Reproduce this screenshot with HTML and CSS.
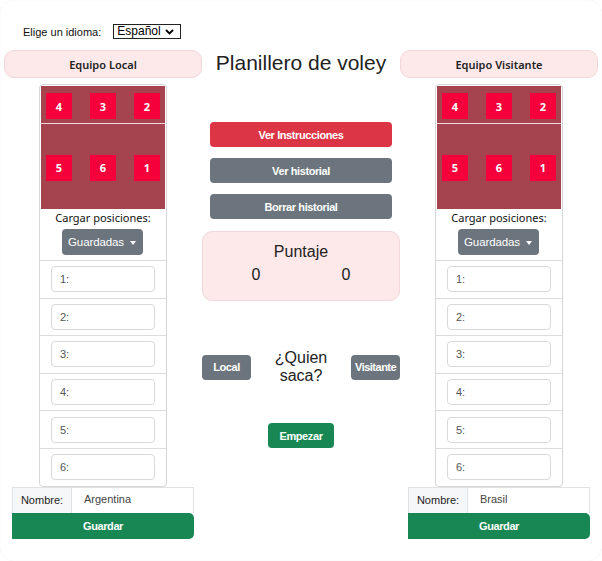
FILE: index.html
```html
<!DOCTYPE html>
<html lang="es">
<head>
<meta charset="utf-8">
<title>Planillero de voley</title>
<link rel="stylesheet" href="styles.css">
</head>
<body>
<div class="page">
  <div class="lang-row">
    <label class="lang-label" for="lang">Elige un idioma:</label>
    <span class="select-wrap">
      <select id="lang" class="lang-select">
        <option>Español</option>
        <option>English</option>
      </select>
      <svg class="chev" width="9" height="6" viewBox="0 0 9 6"><path d="M1 1 L4.5 4.5 L8 1" fill="none" stroke="#000" stroke-width="1.8"/></svg>
    </span>
  </div>

  <div class="columns">
    <section class="team">
      <div class="team-header">Equipo Local</div>
      <div class="team-box">
        <div class="court">
          <div class="court-row front">
            <span class="player">4</span><span class="player">3</span><span class="player">2</span>
          </div>
          <div class="court-row back">
            <span class="player">5</span><span class="player">6</span><span class="player">1</span>
          </div>
        </div>
        <div class="load-label">Cargar posiciones:</div>
        <div class="load-wrap"><button class="btn btn-gray dropdown">Guardadas <span class="caret"></span></button></div>
        <ul class="pos-list">
          <li><input class="pos-input" placeholder="1:"></li>
          <li><input class="pos-input" placeholder="2:"></li>
          <li><input class="pos-input" placeholder="3:"></li>
          <li><input class="pos-input" placeholder="4:"></li>
          <li><input class="pos-input" placeholder="5:"></li>
          <li><input class="pos-input" placeholder="6:"></li>
        </ul>
      </div>
      <div class="name-group">
        <span class="name-addon">Nombre:</span>
        <input class="name-input" value="Argentina">
      </div>
      <button class="btn btn-green save">Guardar</button>
    </section>

    <section class="center">
      <h1 class="title">Planillero de voley</h1>
      <div class="actions">
        <button class="btn btn-red wide">Ver Instrucciones</button>
        <button class="btn btn-gray wide">Ver historial</button>
        <button class="btn btn-gray wide">Borrar historial</button>
      </div>
      <div class="score">
        <div class="score-title">Puntaje</div>
        <div class="score-row"><span>0</span><span>0</span></div>
      </div>
      <div class="serve-row">
        <button class="btn btn-gray serve serve-local">Local</button>
        <div class="serve-q">¿Quien<br>saca?</div>
        <button class="btn btn-gray serve serve-visit">Visitante</button>
      </div>
      <div class="start-wrap"><button class="btn btn-green start">Empezar</button></div>
    </section>

    <section class="team">
      <div class="team-header">Equipo Visitante</div>
      <div class="team-box">
        <div class="court">
          <div class="court-row front">
            <span class="player">4</span><span class="player">3</span><span class="player">2</span>
          </div>
          <div class="court-row back">
            <span class="player">5</span><span class="player">6</span><span class="player">1</span>
          </div>
        </div>
        <div class="load-label">Cargar posiciones:</div>
        <div class="load-wrap"><button class="btn btn-gray dropdown">Guardadas <span class="caret"></span></button></div>
        <ul class="pos-list">
          <li><input class="pos-input" placeholder="1:"></li>
          <li><input class="pos-input" placeholder="2:"></li>
          <li><input class="pos-input" placeholder="3:"></li>
          <li><input class="pos-input" placeholder="4:"></li>
          <li><input class="pos-input" placeholder="5:"></li>
          <li><input class="pos-input" placeholder="6:"></li>
        </ul>
      </div>
      <div class="name-group">
        <span class="name-addon">Nombre:</span>
        <input class="name-input" value="Brasil">
      </div>
      <button class="btn btn-green save">Guardar</button>
    </section>
  </div>
</div>
</body>
</html>
```

FILE: styles.css
```css
* { box-sizing: border-box; }
html, body { margin: 0; padding: 0; background: #fff; }
body { font-family: "Liberation Sans", Arial, sans-serif; color: #212529; }

.page {
  width: 602px;
  height: 561px;
  border-radius: 14px;
  box-shadow: inset 0 0 1px rgba(0,0,0,0.12);
  padding-top: 24px;
  overflow: hidden;
}

.lang-row {
  display: flex;
  align-items: center;
  padding-left: 23px;
  height: 15px;
}
.lang-label { font-size: 11px; color: #111; margin-right: 12px; }
.select-wrap { position: relative; display: inline-block; height: 15px; }
.lang-select {
  -webkit-appearance: none;
  appearance: none;
  display: block;
  font-family: "Liberation Sans", Arial, sans-serif;
  font-size: 12px;
  line-height: 13px;
  width: 68px;
  height: 15px;
  padding: 0 0 0 3px;
  border: 1px solid #222;
  border-radius: 0;
  background: #fff;
  color: #000;
}
.chev { position: absolute; right: 7px; top: 5px; pointer-events: none; }

.columns {
  display: grid;
  grid-template-columns: 198px 198px 198px;
  margin-top: 11px;
  padding-left: 4px;
}

.team { display: flex; flex-direction: column; align-items: center; }

.team-header {
  width: 198px;
  height: 28px;
  background: #fde8ea;
  border: 1px solid #f3d6da;
  border-radius: 10px;
  font-family: "Noto Sans", "Open Sans", sans-serif;
  font-weight: 600;
  font-size: 11px;
  color: #222;
  display: flex;
  align-items: center;
  justify-content: center;
}

.team-box {
  margin-top: 6px;
  width: 128px;
  border: 1px solid #d6d6d6;
  border-radius: 4px;
  padding: 1px 1px 0;
}

.court { background: #a5444f; }
.court-row {
  display: flex;
  justify-content: space-between;
  align-items: center;
  padding: 0 5px;
}
.court-row.front { height: 38px; padding-top: 3px; border-bottom: 1px solid #f1d7da; }
.court-row.back { height: 85px; padding-top: 2px; }
.player {
  width: 26px;
  height: 26px;
  background: #f5003a;
  color: #fff;
  font-family: "Noto Sans", "Open Sans", sans-serif;
  font-weight: 700;
  font-size: 11px;
  display: flex;
  align-items: center;
  justify-content: center;
}

.load-label {
  text-align: center;
  font-family: "Noto Sans", "Open Sans", sans-serif;
  font-size: 11px;
  color: #111;
  margin-top: 1px;
  height: 18px;
  line-height: 16px;
}
.load-wrap { display: flex; justify-content: center; margin-top: 1px; }

.btn {
  border: none;
  color: #fff;
  font-family: "Liberation Sans", Arial, sans-serif;
  font-weight: 700;
  font-size: 11px;
  letter-spacing: -0.4px;
  border-radius: 4px;
  cursor: pointer;
  padding: 0;
  white-space: nowrap;
}
.btn-gray { background: #6c757d; }
.btn-red { background: #dc3545; }
.btn-green { background: #198754; }

.dropdown {
  width: 81px;
  height: 26px;
  font-weight: 400;
  font-size: 11.5px;
  letter-spacing: -0.1px;
  display: flex;
  align-items: center;
  justify-content: center;
  gap: 6px;
  margin-left: -2px;
}
.caret {
  display: inline-block;
  width: 0; height: 0;
  border-left: 3.5px solid transparent;
  border-right: 3.5px solid transparent;
  border-top: 4px solid #fff;
  margin-top: 1px;
}

.pos-list { list-style: none; margin: 5px -1px 0; padding: 0; }
.pos-list li {
  border-top: 1px solid #dcdcdc;
  height: 37.6px;
  display: flex;
  justify-content: center;
  align-items: center;
}
.pos-input {
  width: 104px;
  height: 26px;
  border: 1px solid #d9d9d9;
  border-radius: 4px;
  padding: 0 8px;
  font-family: "Liberation Sans", Arial, sans-serif;
  font-size: 11px;
  color: #333;
}
.pos-input::placeholder { color: #555; }

.name-group {
  display: flex;
  width: 182px;
  height: 26px;
  border: 1px solid #e2e2e2;
  border-bottom: none;
}
.name-addon {
  width: 59px;
  background: #f6f7f9;
  border-right: 1px solid #e2e2e2;
  font-size: 11px;
  color: #222;
  display: flex;
  align-items: center;
  justify-content: center;
}
.name-input {
  flex: 1;
  min-width: 0;
  border: none;
  padding: 0 0 3px 12px;
  font-family: "Liberation Sans", Arial, sans-serif;
  font-size: 11px;
  color: #444;
  background: #fff;
}

.save {
  width: 182px;
  height: 26px;
  border-radius: 0 5px 5px 0;
}

.center { display: flex; flex-direction: column; align-items: center; }
.title {
  margin: -1px 0 0;
  height: 28px;
  font-weight: 400;
  font-size: 21px;
  line-height: 28px;
  color: #222;
}
.actions {
  margin-top: 45px;
  display: flex;
  flex-direction: column;
  gap: 11px;
}
.wide { width: 182px; height: 25px; }

.score {
  margin-top: 12px;
  width: 198px;
  height: 70px;
  background: #fde8ea;
  border: 1px solid #f2d8dc;
  border-radius: 10px;
  padding: 10px 8px 0;
  font-size: 16px;
  color: #222;
}
.score-title { text-align: center; height: 20px; line-height: 20px; }
.score-row {
  display: grid;
  grid-template-columns: 1fr 1fr;
  text-align: center;
  line-height: 20px;
  margin-top: 3px;
}

.serve-row {
  margin-top: 48px;
  width: 198px;
  display: flex;
  align-items: center;
  justify-content: space-between;
}
.serve {
  width: 49px;
  height: 25px;
  overflow: hidden;
}
.serve-local { text-align: center; }
.serve-visit { text-align: left; padding-left: 4px; letter-spacing: -0.5px; }
.serve-q {
  text-align: center;
  font-size: 16px;
  line-height: 18px;
  color: #222;
}

.start-wrap { margin-top: 38px; }
.start { width: 66px; height: 25px; }
```
